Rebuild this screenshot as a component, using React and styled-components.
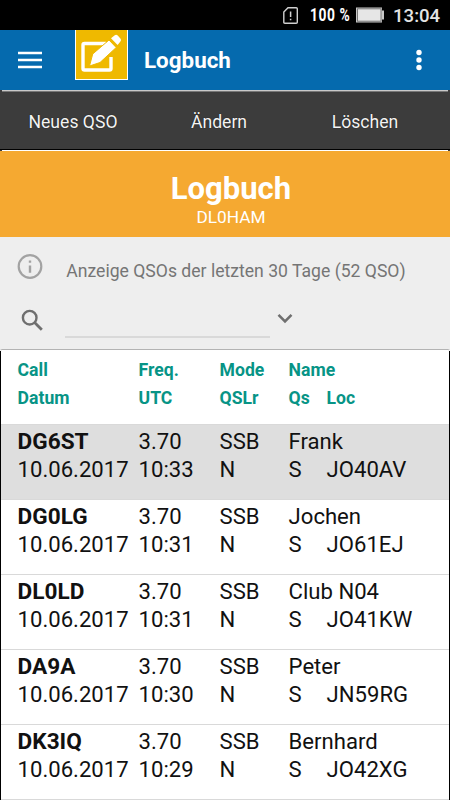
import React, { useState } from 'react';
import styled, { createGlobalStyle } from 'styled-components';

const GlobalStyle = createGlobalStyle`
  * {
    box-sizing: border-box;
  }

  body {
    margin: 0;
    background: #000;
    font-family: Roboto, "Liberation Sans", sans-serif;
  }
`;

const Screen = styled.div`
  width: 450px;
  height: 800px;
  overflow: hidden;
  display: flex;
  flex-direction: column;
`;

const StatusBar = styled.div`
  height: 30px;
  flex-shrink: 0;
  background: #000;
  color: #e4e4e4;
  display: flex;
  align-items: center;
  padding-left: 283px;
`;

const SimIcon = styled.svg`
  width: 16px;
  height: 19px;
`;

const Percent = styled.span`
  width: 40px;
  margin-left: 11px;
  font-size: 17.5px;
  font-weight: 700;
  line-height: 31px;
  letter-spacing: 0.7px;
  color: #fff;
  white-space: nowrap;
  transform: scaleX(0.79);
  transform-origin: left;
`;

const BatteryIcon = styled.svg`
  width: 28px;
  height: 16px;
  margin-left: 6px;
`;

const Clock = styled.span`
  margin-left: 9px;
  padding-top: 1px;
  font-size: 18.6px;
  font-weight: 500;
  line-height: 30px;
`;

const AppBar = styled.header`
  height: 60px;
  flex-shrink: 0;
  background: #056aae;
  display: flex;
  align-items: flex-start;
`;

const MenuIcon = styled.svg`
  width: 24px;
  height: 18px;
  margin: 21px 0 0 18px;
`;

const Logo = styled.svg`
  width: 53px;
  height: 50px;
  margin-left: 33px;
`;

const AppTitle = styled.div`
  flex: 1;
  margin-left: 16px;
  color: #fff;
  font-size: 22.4px;
  font-weight: 700;
  line-height: 60px;
`;

const MoreIcon = styled.svg`
  width: 6px;
  height: 22px;
  margin: 19px 28px 0 0;
`;

const ActionBar = styled.nav`
  height: 61px;
  flex-shrink: 0;
  background: #3c3c3c;
  display: grid;
  grid-template-columns: repeat(3, 146px);
  justify-content: start;
  grid-template-rows: 2px 57px 1px 1px;
`;

const Rule = styled.div`
  grid-column: 1 / -1;
  width: ${(props) => (props.$full ? '450px' : '446px')};
  margin-left: ${(props) => (props.$full ? '0' : '2px')};
  background: ${(props) => props.$color};
`;

const Action = styled.button`
  border: 0;
  padding: 3px 0 0;
  background: none;
  color: #f4f4f4;
  font-family: inherit;
  font-size: 17.6px;
  text-shadow: 0 0 1px #111;
`;

const Banner = styled.section`
  height: 86px;
  flex-shrink: 0;
  background: #f5a931;
  color: #fff;
  text-align: center;
  padding: 20px 0 0 12px;
`;

const BannerTitle = styled.h1`
  margin: 0;
  font-size: 31px;
  font-weight: 700;
  line-height: 36px;
`;

const BannerCall = styled.div`
  font-size: 17.3px;
  line-height: 21px;
`;

const Filter = styled.section`
  height: 112px;
  flex-shrink: 0;
  background: #eee;
`;

const InfoRow = styled.div`
  display: flex;
  padding: 16px 0 0 17px;
  height: 66px;
`;

const InfoIcon = styled.svg`
  width: 26px;
  height: 26px;
`;

const InfoText = styled.div`
  margin: 7px 0 0 23.3px;
  font-size: 17.6px;
  line-height: 23px;
  white-space: nowrap;
  color: #757575;
`;

const SearchRow = styled.div`
  display: flex;
  padding-left: 21px;
`;

const SearchIcon = styled.svg`
  width: 22px;
  height: 22px;
  margin-top: 6px;
`;

const SearchInput = styled.input`
  width: 205px;
  height: 35px;
  margin-left: 22px;
  border: 0;
  border-bottom: 2px solid #d9d9d9;
  background: transparent;
  outline: none;
  font: 18px Roboto, sans-serif;
`;

const ChevronIcon = styled.svg`
  width: 16px;
  height: 11px;
  margin: 10px 0 0 7px;
`;

const Log = styled.main`
  flex: 1;
  background: #fff;
  border-left: 1px solid #000;
  border-right: 1px solid #000;
`;

const TopLine = styled.div`
  height: 2px;
  flex-shrink: 0;
  background: #fff;
  border-top: 1px solid #b3b3b3;
  border-left: 2px solid #eee;
  border-right: 2px solid #eee;
`;

const Row = styled.div`
  display: grid;
  grid-template-columns: 121px 81px 69px 38px 1fr;
  grid-auto-rows: 27.7px;
  align-content: start;
  padding-left: 16.6px;
  white-space: nowrap;
`;

const HeadRow = styled(Row)`
  height: 73px;
  padding-top: 5.4px;
  color: #079486;
  font-size: 17.6px;
  font-weight: 700;
  line-height: 28px;
`;

const EntryRow = styled(Row)`
  height: 75px;
  padding-top: 2px;
  border-top: 1px solid #d9d9d9;
  background: ${(props) => (props.$selected ? '#dedede' : '#fff')};
  color: #111;
  font-size: 22.1px;
  line-height: 28px;

  &:last-child {
    height: 76px;
    border-bottom: 1px solid #d9d9d9;
  }
`;

const Cell = styled.span`
  grid-column: span ${(props) => props.$span || 1};
`;

const CallCell = styled(Cell)`
  font-size: 22.6px;
  font-weight: 700;
  line-height: 30px;
`;

const entries = [
  { call: 'DG6ST', date: '10.06.2017', freq: '3.70', utc: '10:33', mode: 'SSB', qslr: 'N', name: 'Frank', qs: 'S', loc: 'JO40AV' },
  { call: 'DG0LG', date: '10.06.2017', freq: '3.70', utc: '10:31', mode: 'SSB', qslr: 'N', name: 'Jochen', qs: 'S', loc: 'JO61EJ' },
  { call: 'DL0LD', date: '10.06.2017', freq: '3.70', utc: '10:31', mode: 'SSB', qslr: 'N', name: 'Club N04', qs: 'S', loc: 'JO41KW' },
  { call: 'DA9A', date: '10.06.2017', freq: '3.70', utc: '10:30', mode: 'SSB', qslr: 'N', name: 'Peter', qs: 'S', loc: 'JN59RG' },
  { call: 'DK3IQ', date: '10.06.2017', freq: '3.70', utc: '10:29', mode: 'SSB', qslr: 'N', name: 'Bernhard', qs: 'S', loc: 'JO42XG' },
];

function Status() {
  return (
    <StatusBar>
      <SimIcon viewBox="0 0 16 19" fill="none" stroke="#d0d0d0">
        <path d="M5 1.7h8.2q1.1 0 1.1 1.1v13.4q0 1.1-1.1 1.1H1.9q-1.1 0-1.1-1.1V6z" strokeWidth="1.4" />
        <path d="M7.6 5.5v5.5M7.6 12.7v1.6" strokeWidth="1.5" />
      </SimIcon>
      <Percent>100 %</Percent>
      <BatteryIcon viewBox="0 0 28 16">
        <path d="M0 .5h26v3h2v9h-2v3H0z" fill="#c8c8c8" />
        <rect x="1.5" y="1.8" width="23.5" height="12.4" fill="#e6e6e6" stroke="#777" />
      </BatteryIcon>
      <Clock>13:04</Clock>
    </StatusBar>
  );
}

function Header() {
  return (
    <AppBar>
      <MenuIcon viewBox="0 0 24 18" stroke="#fff" strokeWidth="2.4">
        <path d="M0 2h24M0 9h24M0 16h24" />
      </MenuIcon>
      <Logo viewBox="0 0 53 50">
        <path d="M0 0h53v50H0z" fill="#fff" />
        <path d="M1 0h51v49H1z" fill="#efb900" />
        <path d="M31 13.5H9.5q-1.5 0-1.5 1.5v23.5q0 1.5 1.5 1.5h25q1.5 0 1.5-1.5V27" fill="none" stroke="#fff" strokeWidth="3.4" />
        <path d="M14.5 36l3.2-12L34 10l7.2 7.5L25 32.5z" fill="#fff" stroke="#efb900" strokeWidth="1" />
        <path d="M36 8.2L39.8 5.2q1.5-1 2.9.4l2.7 3q1.3 1.5 0 3L42.6 15z" fill="#fff" />
      </Logo>
      <AppTitle>Logbuch</AppTitle>
      <MoreIcon viewBox="0 0 6 22" fill="#fff">
        <circle cx="3" cy="3.5" r="2.7" />
        <circle cx="3" cy="11" r="2.7" />
        <circle cx="3" cy="18.5" r="2.7" />
      </MoreIcon>
    </AppBar>
  );
}

function App() {
  const [selected, setSelected] = useState(0);
  const [query, setQuery] = useState('');

  return (
    <Screen>
      <GlobalStyle />
      <Status />
      <Header />
      <ActionBar>
        <Rule $color="linear-gradient(#c9c9c9 50%, #777 50%)" />
        <Action>Neues QSO</Action>
        <Action>Ändern</Action>
        <Action>Löschen</Action>
        <Rule $color="#000" $full />
        <Rule $color="#fff" />
      </ActionBar>
      <Banner>
        <BannerTitle>Logbuch</BannerTitle>
        <BannerCall>DL0HAM</BannerCall>
      </Banner>
      <Filter>
        <InfoRow>
          <InfoIcon viewBox="0 0 26 26" fill="none" stroke="#a2a2a2" strokeWidth="2.2">
            <circle cx="13" cy="13.5" r="11.3" />
            <path d="M13 12.5v7.2M13 7.6v2.2" strokeWidth="2.4" />
          </InfoIcon>
          <InfoText>Anzeige QSOs der letzten 30 Tage (52 QSO)</InfoText>
        </InfoRow>
        <SearchRow>
          <SearchIcon viewBox="0 0 22 22" fill="none" stroke="#6f6f6f" strokeWidth="2.4">
            <circle cx="8.7" cy="8.7" r="6.8" />
            <path d="M13.6 13.6l7.2 7.2" strokeWidth="2.8" />
          </SearchIcon>
          <SearchInput value={query} onChange={(e) => setQuery(e.target.value)} />
          <ChevronIcon viewBox="0 0 16 11" fill="none" stroke="#6f6f6f" strokeWidth="2.6">
            <path d="M1.5 1.8L8 8.3l6.5-6.5" />
          </ChevronIcon>
        </SearchRow>
      </Filter>
      <TopLine />
      <Log>
        <HeadRow>
          <Cell>Call</Cell>
          <Cell>Freq.</Cell>
          <Cell>Mode</Cell>
          <Cell $span={2}>Name</Cell>
          <Cell>Datum</Cell>
          <Cell>UTC</Cell>
          <Cell>QSLr</Cell>
          <Cell>Qs</Cell>
          <Cell>Loc</Cell>
        </HeadRow>
        {entries.map((entry, i) => (
          <EntryRow key={entry.call} $selected={i === selected} onClick={() => setSelected(i)}>
            <CallCell>{entry.call}</CallCell>
            <Cell>{entry.freq}</Cell>
            <Cell>{entry.mode}</Cell>
            <Cell $span={2}>{entry.name}</Cell>
            <Cell>{entry.date}</Cell>
            <Cell>{entry.utc}</Cell>
            <Cell>{entry.qslr}</Cell>
            <Cell>{entry.qs}</Cell>
            <Cell>{entry.loc}</Cell>
          </EntryRow>
        ))}
      </Log>
    </Screen>
  );
}

export default App;
